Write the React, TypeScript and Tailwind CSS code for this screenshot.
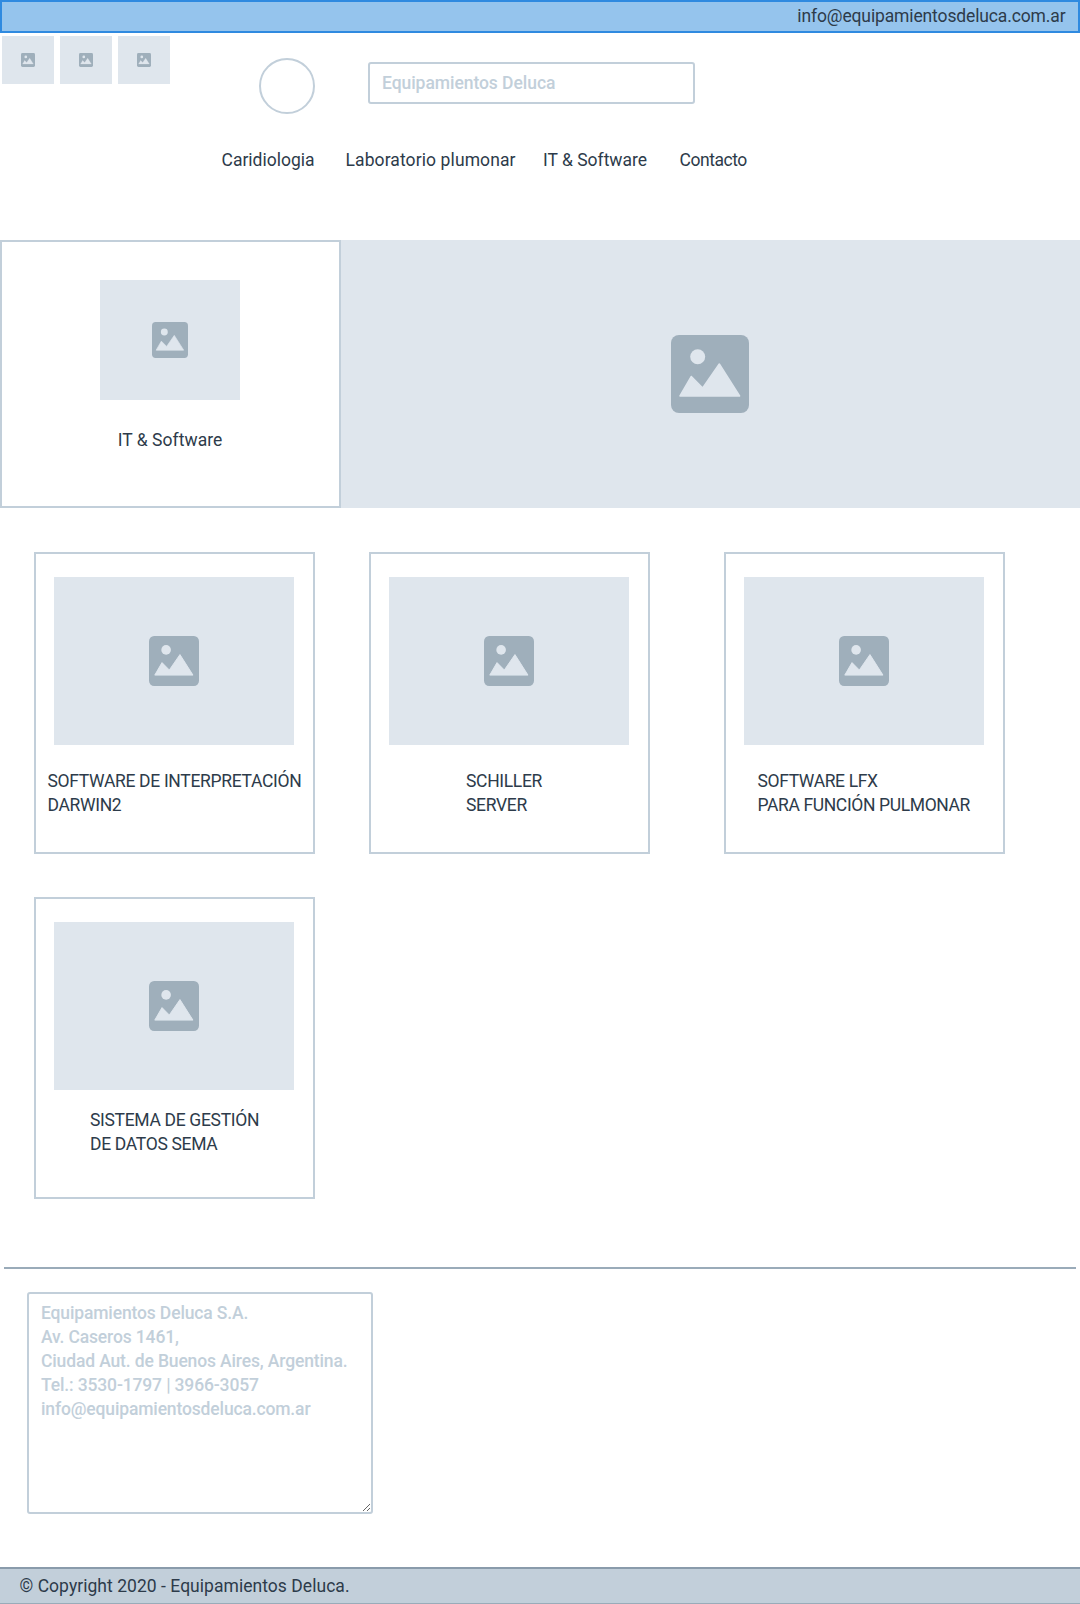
const font = "[font-family:Roboto,'Liberation_Sans',sans-serif]";

function Ph({ className }: { className: string }) {
  return (
    <svg viewBox="0 0 78 78" className={className}>
      <rect width="78" height="78" rx="8" fill="#9fafbb" />
      <circle cx="26.7" cy="21.7" r="7.5" fill="#dfe6ed" />
      <path d="M9 61 L20.3 41.5 L31.7 53 L48.3 29 L68.6 61 Z" fill="#dfe6ed" stroke="#dfe6ed" strokeWidth="1.5" strokeLinejoin="round" />
    </svg>
  );
}

function Thumb() {
  return (
    <div className="flex h-[48px] w-[52px] items-center justify-center bg-[#dfe6ed]">
      <Ph className="h-[14px] w-[14px]" />
    </div>
  );
}

function Card({ lines, textClass }: { lines: string[]; textClass: string }) {
  return (
    <div className="h-[302px] w-[281px] border-2 border-[#c2cfda] pt-[23px]">
      <div className="ml-[18px] flex h-[168px] w-[240px] items-center justify-center bg-[#dfe6ed]">
        <Ph className="h-[50px] w-[50px]" />
      </div>
      <div className={`whitespace-pre text-[17.5px] leading-[24px] tracking-[-0.32px] text-[#2d3b4a] ${textClass}`}>
        {lines.join("\n")}
      </div>
    </div>
  );
}

export default function App() {
  return (
    <div className={`h-[1604px] w-[1080px] overflow-hidden bg-white ${font}`}>
      <div className="flex h-[33px] items-center justify-end border-2 border-[#2f8ae0] bg-[#95c4ed] pr-[12.5px] text-[17.5px] tracking-[-0.13px] text-[#2d3b4a]">
        info@equipamientosdeluca.com.ar
      </div>
      <div className="flex items-start pl-[2px]">
        <div className="mt-[3px] flex gap-[6px]">
          <Thumb />
          <Thumb />
          <Thumb />
        </div>
        <div className="ml-[89px] mt-[25px] h-[56px] w-[56px] rounded-full border-2 border-[#c2cfda]" />
        <input
          placeholder="Equipamientos Deluca"
          className={`ml-[53px] mt-[29px] h-[42px] w-[327px] rounded-[3px] border-2 border-[#c2cfda] px-[12px] text-[17.5px] font-medium tracking-[-0.05px] outline-none placeholder:text-[#c2cfda] ${font}`}
        />
      </div>
      <div className="ml-[221.5px] mt-[34px] flex h-[24px] items-center text-[17.5px] text-[#2d3b4a]">
        <span className="w-[124px]">Caridiologia</span>
        <span className="w-[197.5px] tracking-[0.1px]">Laboratorio plumonar</span>
        <span className="w-[136.5px]">IT &amp; Software</span>
        <span className="tracking-[-0.45px]">Contacto</span>
      </div>
      <div className="mt-[68px] flex h-[268px]">
        <div className="flex h-full w-[341px] flex-col items-center border-2 border-[#c2cfda] pr-[1px] pt-[38px]">
          <div className="flex h-[120px] w-[140px] items-center justify-center bg-[#dfe6ed]">
            <Ph className="h-[36px] w-[36px]" />
          </div>
          <div className="mt-[28px] text-[17.5px] leading-[24px] tracking-[0.05px] text-[#2d3b4a]">IT &amp; Software</div>
        </div>
        <div className="flex flex-1 items-center justify-center bg-[#dfe6ed] pr-[1px]">
          <Ph className="h-[78px] w-[78px]" />
        </div>
      </div>
      <div className="mt-[44px] grid grid-cols-[334.5px_355px_281px] gap-y-[43px] pl-[34px]">
        <Card lines={["SOFTWARE DE INTERPRETACIÓN", "DARWIN2"]} textClass="mt-[24px] pl-[11.5px]" />
        <Card lines={["SCHILLER", "SERVER"]} textClass="mt-[24px] pl-[95.5px]" />
        <Card lines={["SOFTWARE LFX", "PARA FUNCIÓN PULMONAR"]} textClass="mt-[24px] pl-[32px] tracking-[-0.37px]" />
        <Card lines={["SISTEMA DE GESTIÓN", "DE DATOS SEMA"]} textClass="mt-[18px] pl-[54px]" />
      </div>
      <div className="mx-[4px] mt-[68px] h-[2px] bg-[#9aabb9]" />
      <textarea
        readOnly
        defaultValue={"Equipamientos Deluca S.A.\nAv. Caseros 1461,\nCiudad Aut. de Buenos Aires, Argentina.\nTel.: 3530-1797 | 3966-3057\ninfo@equipamientosdeluca.com.ar"}
        className={`ml-[27px] mt-[23px] block h-[222px] w-[346px] rounded-[3px] border-2 border-[#c2cfda] px-[12px] py-[7px] text-[17.5px] font-medium leading-[24px] tracking-[-0.14px] text-[#c2cfda] outline-none ${font}`}
      />
      <div className="mt-[53px] flex h-[37px] items-center border-b border-t-2 border-t-[#8a9bab] border-b-[#9aabb9] bg-[#c2cfda] pl-[19.5px] pt-[1px] text-[17.5px] tracking-[0.04px] text-[#2d3b4a]">
        © Copyright 2020 - Equipamientos Deluca.
      </div>
    </div>
  );
}
